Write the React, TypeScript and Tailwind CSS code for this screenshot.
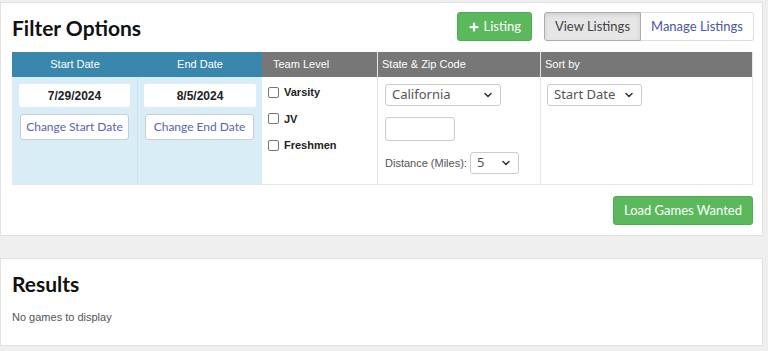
import { ChevronDown, Plus } from "lucide-react";

function Select({ value, className }: { value: string; className: string }) {
  return (
    <div
      className={`flex items-center justify-between rounded-[3px] border border-[#ccc] bg-white pl-1.5 pr-1.5 text-[13px] text-[#555] font-['Noto_Sans',sans-serif] ${className}`}
    >
      <span>{value}</span>
      <ChevronDown className="w-3 h-3 text-[#333]" strokeWidth={3} />
    </div>
  );
}

function Check({ label }: { label: string }) {
  return (
    <label className="flex items-center gap-[5px] text-[11px] font-bold text-[#222]">
      <span className="w-[11px] h-[11px] rounded-[2px] border border-[#767676] bg-white" />
      {label}
    </label>
  );
}

export default function App() {
  return (
    <div className="min-h-[351px] bg-[#efefef] pt-[2px] font-['Liberation_Sans',Arial,sans-serif]">
      {/* Filter card */}
      <div className="w-[763px] h-[234px] bg-white border border-[#e2e2e2] px-[11px]">
        <div className="flex items-center h-[49px] pt-[1px]">
          <h2 className="text-[21px] font-bold text-[#111] font-['Lato',sans-serif]">
            Filter Options
          </h2>
          <div className="ml-auto flex items-center gap-3 mr-[-3px] mt-[-3px] font-['Lato',sans-serif]">
            <button className="flex items-center gap-[3px] h-[29px] px-[10px] rounded-[3px] bg-[#5cb85c] border border-[#4cae4c] text-white text-[13px]">
              <Plus className="w-3 h-3" strokeWidth={4.5} />
              Listing
            </button>
            <div className="flex h-[29px] text-[13px]">
              <button className="px-[10px] rounded-l-[3px] bg-[#e6e6e6] border border-[#adadad] shadow-[inset_0_2px_4px_rgba(0,0,0,0.1)] text-[#444]">
                View Listings
              </button>
              <button className="px-[10px] rounded-r-[3px] bg-white border border-l-0 border-[#ddd] text-[#4a56a8]">
                Manage Listings
              </button>
            </div>
          </div>
        </div>

        <div className="flex w-[741px] text-[11px]">
          {/* Start Date */}
          <div className="w-[126px] bg-[#d9edf7]">
            <div className="h-[25px] flex items-center justify-center bg-[#3a87ad] text-white">Start Date</div>
            <div className="h-[107px] px-[7px] pt-[7px] border-r border-[#cfe3ec]">
              <div className="h-[23px] bg-white rounded-[2px] flex items-center justify-center font-bold text-[12px] text-[#222]">7/29/2024</div>
              <button className="mt-[7px] ml-[1px] w-[109px] h-[26px] bg-white border border-[#ccc] rounded-[3px] text-[12px] text-[#5865b0] font-['Lato',sans-serif]">
                Change Start Date
              </button>
            </div>
          </div>
          {/* End Date */}
          <div className="w-[124px] bg-[#d9edf7]">
            <div className="h-[25px] flex items-center justify-center bg-[#3a87ad] text-white">End Date</div>
            <div className="h-[107px] px-[6px] pt-[7px]">
              <div className="h-[23px] bg-white rounded-[2px] flex items-center justify-center font-bold text-[12px] text-[#222]">8/5/2024</div>
              <button className="mt-[7px] ml-[1px] w-[109px] h-[26px] bg-white border border-[#ccc] rounded-[3px] text-[12px] text-[#5865b0] font-['Lato',sans-serif]">
                Change End Date
              </button>
            </div>
          </div>
          {/* Team Level */}
          <div className="w-[116px] border-r border-[#e6e6e6]">
            <div className="h-[25px] flex items-center pl-[11px] bg-[#777] text-white">Team Level</div>
            <div className="h-[107px] pl-[6px] pt-[7px] flex flex-col gap-[10px]">
              <Check label="Varsity" />
              <Check label="JV" />
              <Check label="Freshmen" />
            </div>
          </div>
          {/* State & Zip */}
          <div className="w-[163px] border-r border-[#e6e6e6]">
            <div className="h-[25px] flex items-center pl-[4px] bg-[#777] text-white">State &amp; Zip Code</div>
            <div className="h-[107px] pl-[7px] pt-[7px]">
              <Select value="California" className="w-[116px] h-[22px]" />
              <div className="mt-[11px] w-[70px] h-[24px] rounded-[3px] border border-[#ccc]" />
              <div className="mt-[11px] flex items-center gap-[3px] text-[11px] text-[#555]">
                Distance (Miles):
                <Select value="5" className="w-[49px] h-[22px]" />
              </div>
            </div>
          </div>
          {/* Sort by */}
          <div className="flex-1 border-r border-[#e6e6e6]">
            <div className="h-[25px] flex items-center pl-[4px] bg-[#777] text-white">Sort by</div>
            <div className="h-[107px] pl-[6px] pt-[7px]">
              <Select value="Start Date" className="w-[95px] h-[22px]" />
            </div>
          </div>
        </div>
        <div className="w-[741px] border-t border-[#e6e6e6]" />

        <div className="flex justify-end w-[741px] mt-[11px]">
          <button className="h-[29px] px-[10px] rounded-[3px] bg-[#5cb85c] border border-[#4cae4c] text-white text-[13px] font-['Lato',sans-serif]">
            Load Games Wanted
          </button>
        </div>
      </div>

      {/* Results card */}
      <div className="mt-[22px] w-[763px] h-[88px] bg-white border border-[#e2e2e2] px-[11px] pt-[9px]">
        <h2 className="text-[21px] font-bold text-[#111] font-['Lato',sans-serif]">Results</h2>
        <p className="mt-[9px] text-[11px] text-[#555]">No games to display</p>
      </div>
    </div>
  );
}
